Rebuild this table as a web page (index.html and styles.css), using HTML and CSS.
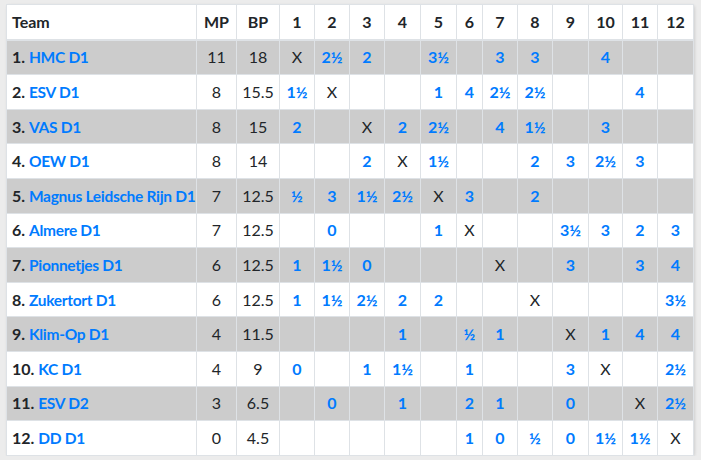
FILE: index.html
```html
<!DOCTYPE html>
<html lang="nl">
<head>
<meta charset="utf-8">
<title>Stand</title>
<link rel="stylesheet" href="styles.css">
</head>
<body>
<div class="card">
<table class="standings">
<colgroup>
<col class="c-team"><col class="c-mp"><col class="c-bp">
<col class="c-35"><col class="c-35"><col class="c-35"><col class="c-36"><col class="c-36">
<col class="c-26"><col class="c-35"><col class="c-35"><col class="c-36"><col class="c-34"><col class="c-35"><col class="c-36">
</colgroup>
<thead>
<tr><th class="team">Team</th><th>MP</th><th>BP</th><th>1</th><th>2</th><th>3</th><th>4</th><th>5</th><th>6</th><th>7</th><th>8</th><th>9</th><th>10</th><th>11</th><th>12</th></tr>
</thead>
<tbody>
<tr class="odd"><td class="team">1. <a href="#">HMC D1</a></td><td>11</td><td>18</td><td>X</td><td><a href="#">2½</a></td><td><a href="#">2</a></td><td></td><td><a href="#">3½</a></td><td></td><td><a href="#">3</a></td><td><a href="#">3</a></td><td></td><td><a href="#">4</a></td><td></td><td></td></tr>
<tr><td class="team">2. <a href="#">ESV D1</a></td><td>8</td><td>15.5</td><td><a href="#">1½</a></td><td>X</td><td></td><td></td><td><a href="#">1</a></td><td><a href="#">4</a></td><td><a href="#">2½</a></td><td><a href="#">2½</a></td><td></td><td></td><td><a href="#">4</a></td><td></td></tr>
<tr class="odd"><td class="team">3. <a href="#">VAS D1</a></td><td>8</td><td>15</td><td><a href="#">2</a></td><td></td><td>X</td><td><a href="#">2</a></td><td><a href="#">2½</a></td><td></td><td><a href="#">4</a></td><td><a href="#">1½</a></td><td></td><td><a href="#">3</a></td><td></td><td></td></tr>
<tr><td class="team">4. <a href="#">OEW D1</a></td><td>8</td><td>14</td><td></td><td></td><td><a href="#">2</a></td><td>X</td><td><a href="#">1½</a></td><td></td><td></td><td><a href="#">2</a></td><td><a href="#">3</a></td><td><a href="#">2½</a></td><td><a href="#">3</a></td><td></td></tr>
<tr class="odd"><td class="team">5. <a href="#">Magnus Leidsche Rijn D1</a></td><td>7</td><td>12.5</td><td><a href="#">½</a></td><td><a href="#">3</a></td><td><a href="#">1½</a></td><td><a href="#">2½</a></td><td>X</td><td><a href="#">3</a></td><td></td><td><a href="#">2</a></td><td></td><td></td><td></td><td></td></tr>
<tr><td class="team">6. <a href="#">Almere D1</a></td><td>7</td><td>12.5</td><td></td><td><a href="#">0</a></td><td></td><td></td><td><a href="#">1</a></td><td>X</td><td></td><td></td><td><a href="#">3½</a></td><td><a href="#">3</a></td><td><a href="#">2</a></td><td><a href="#">3</a></td></tr>
<tr class="odd"><td class="team">7. <a href="#">Pionnetjes D1</a></td><td>6</td><td>12.5</td><td><a href="#">1</a></td><td><a href="#">1½</a></td><td><a href="#">0</a></td><td></td><td></td><td></td><td>X</td><td></td><td><a href="#">3</a></td><td></td><td><a href="#">3</a></td><td><a href="#">4</a></td></tr>
<tr><td class="team">8. <a href="#">Zukertort D1</a></td><td>6</td><td>12.5</td><td><a href="#">1</a></td><td><a href="#">1½</a></td><td><a href="#">2½</a></td><td><a href="#">2</a></td><td><a href="#">2</a></td><td></td><td></td><td>X</td><td></td><td></td><td></td><td><a href="#">3½</a></td></tr>
<tr class="odd"><td class="team">9. <a href="#">Klim-Op D1</a></td><td>4</td><td>11.5</td><td></td><td></td><td></td><td><a href="#">1</a></td><td></td><td><a href="#">½</a></td><td><a href="#">1</a></td><td></td><td>X</td><td><a href="#">1</a></td><td><a href="#">4</a></td><td><a href="#">4</a></td></tr>
<tr><td class="team">10. <a href="#">KC D1</a></td><td>4</td><td>9</td><td><a href="#">0</a></td><td></td><td><a href="#">1</a></td><td><a href="#">1½</a></td><td></td><td><a href="#">1</a></td><td></td><td></td><td><a href="#">3</a></td><td>X</td><td></td><td><a href="#">2½</a></td></tr>
<tr class="odd"><td class="team">11. <a href="#">ESV D2</a></td><td>3</td><td>6.5</td><td></td><td><a href="#">0</a></td><td></td><td><a href="#">1</a></td><td></td><td><a href="#">2</a></td><td><a href="#">1</a></td><td></td><td><a href="#">0</a></td><td></td><td>X</td><td><a href="#">2½</a></td></tr>
<tr><td class="team">12. <a href="#">DD D1</a></td><td>0</td><td>4.5</td><td></td><td></td><td></td><td></td><td></td><td><a href="#">1</a></td><td><a href="#">0</a></td><td><a href="#">½</a></td><td><a href="#">0</a></td><td><a href="#">1½</a></td><td><a href="#">1½</a></td><td>X</td></tr>
</tbody>
</table>
</div>
</body>
</html>
```

FILE: styles.css
```css
html, body {
  margin: 0;
  background: #ececec;
}
body {
  padding: 4px 0 0 6px;
  font-family: Lato, "Open Sans", sans-serif;
  font-size: 16px;
  color: #212529;
}
.card {
  background: #fff;
  width: 688px;
  border-radius: 4px;
  box-shadow: 1px 1px 3px rgba(0,0,0,0.12);
}
.standings {
  border-collapse: collapse;
  table-layout: fixed;
  width: 688px;
}
.c-team { width: 190px; }
.c-mp { width: 40px; }
.c-bp { width: 43px; }
.c-35 { width: 35px; }
.c-36 { width: 36px; }
.c-34 { width: 34px; }
.c-26 { width: 26px; }
.standings th,
.standings td {
  border: 1px solid #dee2e6;
  padding: 4.8px 0;
  line-height: 24px;
  text-align: center;
  white-space: nowrap;
}
.standings th {
  font-weight: 700;
  border-bottom-width: 2px;
}
.standings .team {
  text-align: left;
  padding-left: 5px;
  font-weight: 700;
}
.standings tr.odd td {
  background: #cccccc;
}
.standings a {
  color: #007bff;
  font-weight: 700;
  text-decoration: none;
}
.standings .team a {
  font-size: 15.5px;
  letter-spacing: -0.3px;
}
```
